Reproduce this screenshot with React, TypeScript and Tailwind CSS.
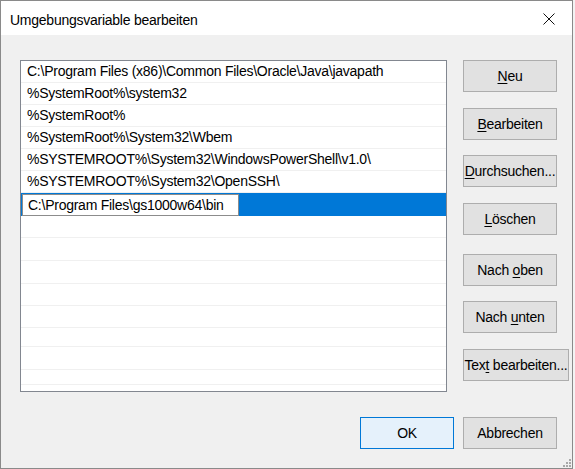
import type { ReactNode } from 'react';

const rows = [
  'C:\\Program Files (x86)\\Common Files\\Oracle\\Java\\javapath',
  '%SystemRoot%\\system32',
  '%SystemRoot%',
  '%SystemRoot%\\System32\\Wbem',
  '%SYSTEMROOT%\\System32\\WindowsPowerShell\\v1.0\\',
  '%SYSTEMROOT%\\System32\\OpenSSH\\',
];

// empty rows below the edited one (heights as they show on screen)
const emptyRows = ['h-[22px]', 'h-[23px]', 'h-[23px]', 'h-[22px]', 'h-[22px]', 'h-[19px]', 'h-[23px]', 'h-[15px]'];

function Key({ children }: { children: ReactNode }) {
  return <span className="underline underline-offset-[2px] decoration-1">{children}</span>;
}

function Button({
  children,
  className = '',
  primary = false,
}: {
  children: ReactNode;
  className?: string;
  primary?: boolean;
}) {
  return (
    <button
      type="button"
      className={
        'flex h-[32px] shrink-0 items-center justify-center border text-black leading-none whitespace-nowrap ' +
        (primary ? 'border-[#0078d7] bg-[#e5f1fb] ' : 'border-[#adadad] bg-[#e1e1e1] ') +
        className
      }
    >
      {children}
    </button>
  );
}

export default function App() {
  return (
    <div
      className="flex h-[469px] w-[575px] bg-[#f3f3f3] text-[14px] tracking-[-0.25px] text-black"
      style={{ fontFamily: '"Segoe UI", "Liberation Sans", Arial, sans-serif' }}
    >
      <div className="relative flex h-[469px] w-[573px] shrink-0 flex-col border border-[#8a8a8a]">
        {/* Title bar */}
        <div className="flex h-[34px] shrink-0 items-center justify-between bg-white pl-[9px] pr-[12px]">
          <span className="pt-[4px] text-[14px]">Umgebungsvariable bearbeiten</span>
          <svg width="12" height="12" viewBox="0 0 12 12" className="mt-[1px] mr-[5px]">
            <path d="M0.5 0.5 L11.5 11.5 M11.5 0.5 L0.5 11.5" stroke="#111" strokeWidth="1" fill="none" />
          </svg>
        </div>

        {/* Body */}
        <div className="flex flex-1 flex-col bg-[#f0f0f0] pl-[19px] pr-[15px] pt-[25px]">
          <div className="flex gap-[16px]">
            {/* Path list */}
            <div className="h-[332px] w-[427px] shrink-0 overflow-hidden border border-[#828790] bg-white">
              {rows.map((r) => (
                <div
                  key={r}
                  className="flex h-[22px] items-center border-b border-[#f0f0f0] pl-[6px] whitespace-nowrap"
                >
                  {r}
                </div>
              ))}
              <div className="flex h-[23px] bg-[#0078d7]">
                <div className="ml-[1px] mt-[1px] flex h-[22px] w-[217px] items-center border border-[#8c8c8c] bg-white pl-[5px] whitespace-nowrap">
                  C:\Program Files\gs1000w64\bin
                </div>
              </div>
              {emptyRows.map((h, i) => (
                <div key={i} className={h + ' border-b border-[#f0f0f0]'} />
              ))}
            </div>

            {/* Side buttons */}
            <div className="flex w-[94px] shrink-0 flex-col">
              <Button className="w-[94px]">
                <Key>N</Key>eu
              </Button>
              <Button className="mt-[16px] w-[94px]">
                <Key>B</Key>earbeiten
              </Button>
              <Button className="mt-[15px] w-[94px]">
                <Key>D</Key>urchsuchen...
              </Button>
              <Button className="mt-[16px] w-[94px]">
                <Key>L</Key>öschen
              </Button>
              <Button className="mt-[19px] w-[94px]">
                Nach&nbsp;<Key>o</Key>ben
              </Button>
              <Button className="mt-[15px] w-[94px]">
                Nach&nbsp;<Key>u</Key>nten
              </Button>
              <Button className="mt-[16px] w-[106px]">
                Tex<Key>t</Key>&nbsp;bearbeiten...
              </Button>
            </div>
          </div>

          {/* Dialog buttons */}
          <div className="mt-[25px] flex justify-end gap-[9px]">
            <Button primary className="w-[94px]">
              OK
            </Button>
            <Button className="w-[94px]">Abbrechen</Button>
          </div>
        </div>

        {/* Size grip */}
        <svg width="9" height="9" viewBox="0 0 9 9" className="absolute bottom-[1px] right-[1px]">
          <g fill="#a8a8a8">
            <rect x="7" y="1" width="2" height="2" />
            <rect x="4" y="4" width="2" height="2" />
            <rect x="7" y="4" width="2" height="2" />
            <rect x="1" y="7" width="2" height="2" />
            <rect x="4" y="7" width="2" height="2" />
            <rect x="7" y="7" width="2" height="2" />
          </g>
        </svg>
      </div>
    </div>
  );
}
